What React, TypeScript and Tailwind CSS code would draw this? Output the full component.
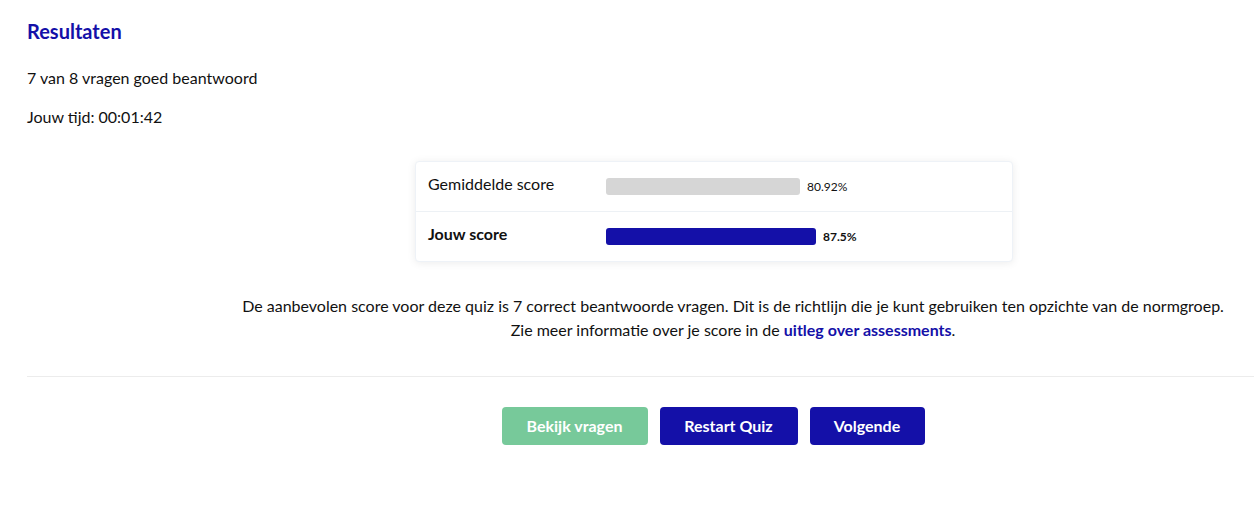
import React from "react";

export default function App() {
  return (
    <div className="w-full overflow-hidden bg-white" style={{ fontFamily: "Lato, 'Noto Sans', sans-serif" }}>
      <div className="w-[1401px] pl-[27px] pt-[19px] pb-[74px]">
        <h2 className="text-[20px] font-bold text-[#1410a8] leading-[24px]">Resultaten</h2>
        <p className="mt-[24px] text-[16px] leading-[22px] text-[#111]">7 van 8 vragen goed beantwoord</p>
        <p className="mt-[17px] text-[16px] leading-[22px] text-[#111]">Jouw tijd: 00:01:42</p>

        <div className="mt-[33px] flex justify-center">
          <div className="w-[598px] rounded-[4px] bg-white shadow-[0_1px_8px_rgba(0,0,0,0.08)] border border-[#eef2f7]">
            <div className="flex h-[50px] items-center border-b border-[#edf1f5] px-[12px]">
              <div className="w-[178px] text-[16px] text-[#111] -mt-[5px]">Gemiddelde score</div>
              <div className="flex items-center gap-[7px]">
                <div className="h-[17px] w-[194px] rounded-[3px] bg-[#d6d6d6]" />
                <span className="text-[12px] text-[#111]">80.92%</span>
              </div>
            </div>
            <div className="flex h-[49px] items-center px-[12px]">
              <div className="w-[178px] text-[16px] font-bold text-[#111] -mt-[5px]">Jouw score</div>
              <div className="flex items-center gap-[7px]">
                <div className="h-[17px] w-[210px] rounded-[3px] bg-[#1410a8]" />
                <span className="text-[12px] font-bold text-[#111]">87.5%</span>
              </div>
            </div>
          </div>
        </div>

        <div className="mt-[32px] pl-[38px] text-center text-[16px] leading-[24px] text-[#111]">
          <p>De aanbevolen score voor deze quiz is 7 correct beantwoorde vragen. Dit is de richtlijn die je kunt gebruiken ten opzichte van de normgroep.</p>
          <p>
            Zie meer informatie over je score in de{" "}
            <a className="font-bold text-[#1410a8]" href="#">uitleg over assessments</a>.
          </p>
        </div>

        <div className="mt-[34px] border-t border-[#ececec]" />

        <div className="mt-[30px] flex justify-center gap-[12px] -ml-[2px]">
          <button className="h-[38px] w-[146px] rounded-[4px] bg-[#77c99a] text-[16px] font-bold text-white">Bekijk vragen</button>
          <button className="h-[38px] w-[138px] rounded-[4px] bg-[#1410a8] text-[16px] font-bold text-white">Restart Quiz</button>
          <button className="h-[38px] w-[115px] rounded-[4px] bg-[#1410a8] text-[16px] font-bold text-white">Volgende</button>
        </div>
      </div>
    </div>
  );
}
